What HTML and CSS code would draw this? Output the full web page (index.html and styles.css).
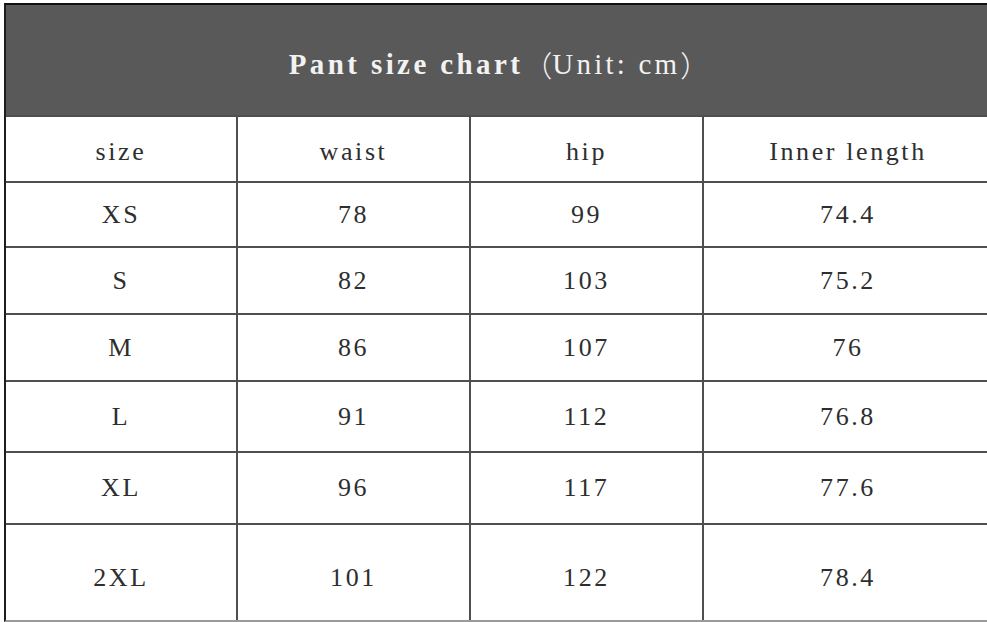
FILE: index.html
```html
<!DOCTYPE html>
<html lang="en">
<head>
<meta charset="utf-8">
<title>Pant size chart</title>
<link rel="stylesheet" href="styles.css">
</head>
<body>
<div class="chart">
  <div class="title"><b class="title-main">Pant size chart</b><span class="paren">（</span><span class="title-unit">Unit: cm</span><span class="paren">）</span></div>
  <div class="cell head">size</div>
  <div class="cell head">waist</div>
  <div class="cell head">hip</div>
  <div class="cell head">Inner length</div>

  <div class="cell">XS</div>
  <div class="cell">78</div>
  <div class="cell">99</div>
  <div class="cell">74.4</div>

  <div class="cell">S</div>
  <div class="cell">82</div>
  <div class="cell">103</div>
  <div class="cell">75.2</div>

  <div class="cell">M</div>
  <div class="cell">86</div>
  <div class="cell">107</div>
  <div class="cell">76</div>

  <div class="cell">L</div>
  <div class="cell">91</div>
  <div class="cell">112</div>
  <div class="cell">76.8</div>

  <div class="cell">XL</div>
  <div class="cell">96</div>
  <div class="cell">117</div>
  <div class="cell">77.6</div>

  <div class="cell last">2XL</div>
  <div class="cell last">101</div>
  <div class="cell last">122</div>
  <div class="cell last">78.4</div>
</div>
</body>
</html>
```

FILE: styles.css
```css
html, body {
  margin: 0;
  padding: 0;
  background: #ffffff;
  overflow: hidden;
}

body {
  width: 987px;
  height: 622px;
}

.chart {
  margin: 3px 0 0 4px;
  width: 989px;
  display: grid;
  grid-template-columns: 230px 231px 231px 288px;
  grid-template-rows: 110px 64px 63px 65px 65px 69px 70px 95px;
  gap: 2px;
  background: #4f4f4f;
  border-top: 2px solid #111111;
  border-left: 2px solid #1e1e1e;
  border-bottom: 2px solid #9a9a9a;
  font-family: "Liberation Serif", "Times New Roman", serif;
  color: #2e2e2e;
}

.title {
  grid-column: 1 / -1;
  background: #595959;
  color: #f2f2f2;
  display: flex;
  align-items: center;
  justify-content: center;
  padding: 8px 0 0 0;
  font-size: 29px;
  box-sizing: border-box;
  white-space: pre;
}

.title-main {
  font-weight: bold;
  letter-spacing: 3.4px;
}

.title-unit {
  font-weight: normal;
  letter-spacing: 3.2px;
}

.paren {
  font-family: "Noto Sans CJK SC", sans-serif;
  font-weight: 300;
  letter-spacing: 0;
}

.cell {
  background: #ffffff;
  display: flex;
  align-items: center;
  justify-content: center;
  font-size: 26px;
  letter-spacing: 2.6px;
  white-space: pre;
}

.cell.head {
  padding-top: 6px;
  box-sizing: border-box;
}

.cell.last {
  padding-top: 10px;
  box-sizing: border-box;
}
```
